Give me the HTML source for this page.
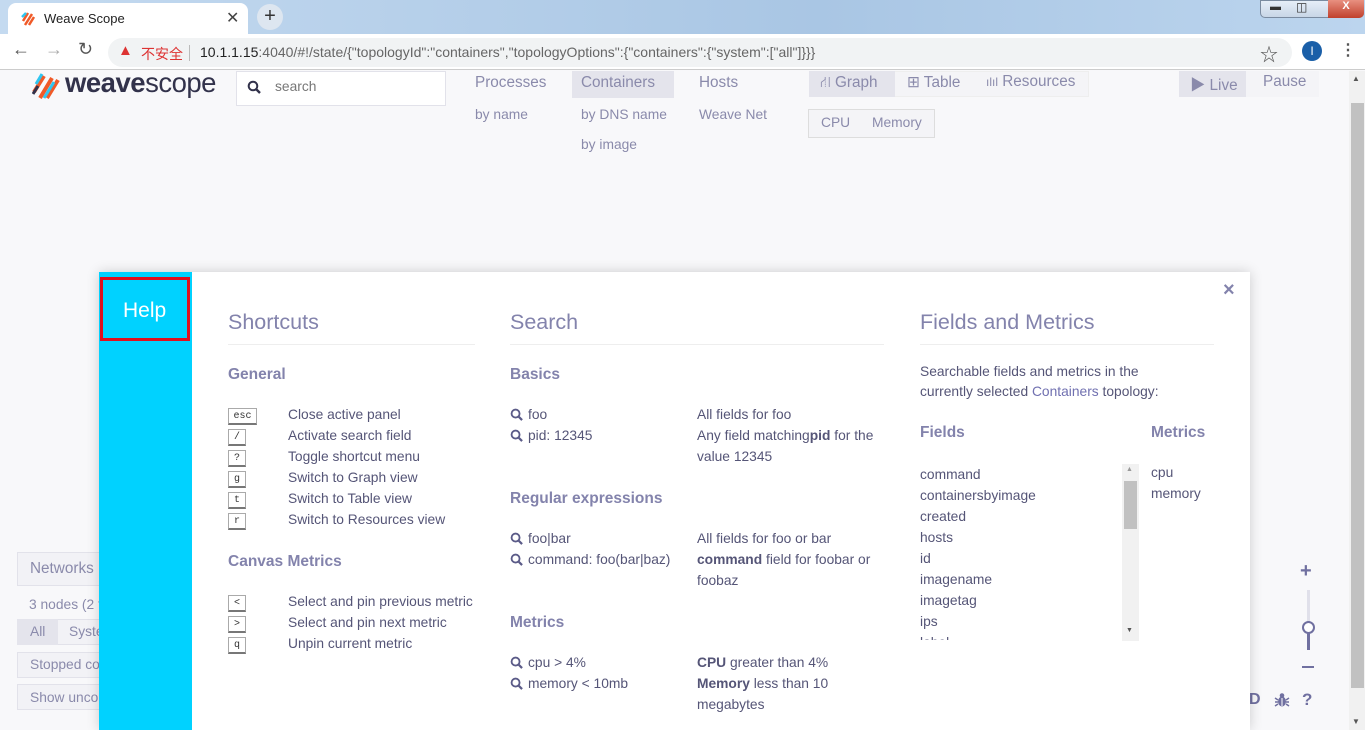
<!DOCTYPE html>
<html><head><meta charset="utf-8"><style>
*{box-sizing:border-box;margin:0;padding:0}
body{width:1365px;height:730px;overflow:hidden;position:relative;font-family:"Liberation Sans","Noto Sans CJK SC",sans-serif;background:#f8f8fa;color:#5b5b88}
.a{position:absolute;white-space:nowrap}
.tabbar{position:absolute;left:0;top:0;width:1365px;height:34px;background:linear-gradient(90deg,#c4daf0,#a9c6e4 60%,#bcd5ee)}
.tab{position:absolute;left:8px;top:3px;width:240px;height:32px;background:#fff;border-radius:8px 8px 0 0}
.toolbar{position:absolute;left:0;top:34px;width:1365px;height:36px;background:#fff;border-bottom:1px solid #ccc}
.url{position:absolute;left:108px;top:4px;width:1184px;height:29px;background:#f1f3f4;border-radius:15px}
.nav{font-size:15.3px;color:#8a8aab}
.t{font-size:13.8px;color:#555577}
.h2{font-size:21.5px;color:#8383ac}
.h3{font-size:15.5px;font-weight:bold;color:#8383ac}
.kbd{position:absolute;width:18px;height:17px;border:1px solid #aaa;border-bottom:2px solid #777;background:#fff;font-family:"Liberation Mono",monospace;font-size:10px;text-align:center;line-height:15px;color:#333}
.mag{display:inline-block;width:13px;height:13px;vertical-align:-2px;margin-right:5px}
</style></head><body>
<div class="tabbar"></div>
<div class="tab">
<svg class="a" style="left:12px;top:8px" width="16" height="16" viewBox="0 0 16 16"><path d="M3 10 L8 2 M5 14 L12 3 M9 14 L14 6" stroke="#f05a28" stroke-width="2.5"/><path d="M2 6 L6 2" stroke="#30c6f0" stroke-width="2.5"/></svg>
<span class="a" style="left:36px;top:8px;font-size:13px;color:#222">Weave Scope</span>
<span class="a" style="left:218px;top:5px;font-size:16px;color:#444">✕</span>
</div>
<div class="a" style="left:257px;top:4px;width:26px;height:26px;border-radius:13px;background:#dde6f0;font-size:20px;line-height:25px;text-align:center;color:#333">+</div>
<div class="a" style="left:1260px;top:0;width:104px;height:18px;border:1px solid #7a8ba0;border-radius:0 0 5px 5px;background:linear-gradient(#e6eef8,#c8d6e6)"></div>
<div class="a" style="left:1328px;top:0;width:36px;height:18px;background:linear-gradient(#e89080,#c0402c);border-radius:0 0 5px 0;color:#fff;font-size:11px;text-align:center;font-weight:bold">X</div>
<span class="a" style="left:1270px;top:1px;font-size:11px;color:#333">▬</span><span class="a" style="left:1296px;top:0px;font-size:12px;color:#333">◫</span>
<div class="toolbar">
<span class="a" style="left:12px;top:5px;font-size:18px;color:#555">←</span>
<span class="a" style="left:45px;top:5px;font-size:18px;color:#aaa">→</span>
<span class="a" style="left:78px;top:5px;font-size:18px;color:#555">↻</span>
<div class="url">
<span class="a" style="left:10px;top:4px;font-size:15px;color:#d33">▲</span>
<span class="a" style="left:33px;top:6px;font-size:14px;color:#d33">不安全</span>
<div class="a" style="left:81px;top:7px;width:1px;height:16px;background:#bbb"></div>
<span class="a" style="left:92px;top:6px;font-size:14px;color:#222">10.1.1.15<span style="color:#666">:4040/#!/state/{"topologyId":"containers","topologyOptions":{"containers":{"system":["all"]}}}</span></span>
<span class="a" style="left:1152px;top:3px;font-size:18px;color:#555">☆</span>
</div>
<div class="a" style="left:1302px;top:7px;width:20px;height:20px;border-radius:10px;background:#1a5fa8;color:#fff;font-size:12px;text-align:center;line-height:20px">I</div>
<span class="a" style="left:1340px;top:6px;font-size:16px;color:#555;font-weight:bold">⋮</span>
</div>
<div class="a" style="left:1349px;top:71px;width:16px;height:659px;background:#f1f1f1"></div>
<div class="a" style="left:1351px;top:103px;width:13px;height:585px;background:#c1c1c1"></div>
<span class="a" style="left:1352px;top:74px;font-size:8px;color:#555">▲</span>
<span class="a" style="left:1352px;top:717px;font-size:8px;color:#555">▼</span>
<svg class="a" style="left:32px;top:72px" width="30" height="28" viewBox="0 0 30 28"><path d="M2 20 L12 4 M8 26 L20 6 M15 26 L26 8" stroke="#f05a28" stroke-width="4"/><path d="M4 12 L10 2 M12 26 L22 10" stroke="#30c6f0" stroke-width="3"/><path d="M1 22 L6 14" stroke="#32324b" stroke-width="3"/></svg>
<span class="a" style="left:65px;top:67px;font-size:27.5px;color:#32324b;letter-spacing:-0.5px"><b>weave</b>scope</span>
<div class="a" style="left:236px;top:71px;width:210px;height:35px;background:#fff;border:1px solid #e2e2ea"></div>
<svg class="a" style="left:247px;top:80px" width="14" height="14" viewBox="0 0 14 14"><circle cx="6" cy="6" r="4.3" fill="none" stroke="#32324b" stroke-width="2"/><path d="M9 9 L13 13" stroke="#32324b" stroke-width="2.4"/></svg>
<span class="a t" style="left:275px;top:79px;color:#777">search</span>
<span class="a nav" style="left:475px;top:74px">Processes</span>
<span class="a t" style="left:475px;top:107px;color:#8a8aab">by name</span>
<div class="a" style="left:572px;top:71px;width:102px;height:27px;background:#e4e4ec"></div>
<span class="a nav" style="left:581px;top:74px">Containers</span>
<span class="a t" style="left:581px;top:107px;color:#8a8aab">by DNS name</span>
<span class="a t" style="left:581px;top:137px;color:#8a8aab">by image</span>
<span class="a nav" style="left:699px;top:74px">Hosts</span>
<span class="a t" style="left:699px;top:107px;color:#8a8aab">Weave Net</span>
<div class="a" style="left:809px;top:71px;width:280px;height:26px;background:#f4f4f7;border:1px solid #eee"></div>
<div class="a" style="left:809px;top:71px;width:86px;height:26px;background:#e4e4ec"></div>
<span class="a nav" style="left:820px;top:73px">⛙ Graph</span>
<span class="a nav" style="left:907px;top:73px">⊞ Table</span>
<span class="a nav" style="left:986px;top:73px"><span style="font-size:12px">ılıl</span> Resources</span>
<div class="a" style="left:808px;top:109px;width:127px;height:29px;background:#f4f4f7;border:1px solid #ddd"></div>
<span class="a t" style="left:821px;top:115px;color:#8a8aab">CPU</span>
<span class="a t" style="left:872px;top:115px;color:#8a8aab">Memory</span>
<div class="a" style="left:1179px;top:71px;width:140px;height:26px;background:#f4f4f7"></div>
<div class="a" style="left:1179px;top:71px;width:67px;height:26px;background:#e4e4ec"></div>
<span class="a nav" style="left:1190px;top:73px">▶ Live</span>
<span class="a nav" style="left:1263px;top:73px">Pause</span>
<div class="a" style="left:17px;top:552px;width:90px;height:34px;background:#f2f2f6;border:1px solid #e2e2ea"></div>
<span class="a nav" style="left:30px;top:560px">Networks</span>
<span class="a t" style="left:29px;top:597px;color:#8a8aab">3 nodes (2 f</span>
<div class="a" style="left:17px;top:619px;width:90px;height:26px;background:#f2f2f6;border:1px solid #e2e2ea"></div>
<div class="a" style="left:17px;top:619px;width:41px;height:26px;background:#e4e4ec"></div>
<span class="a t" style="left:30px;top:624px;color:#8a8aab">All</span><span class="a t" style="left:69px;top:624px;color:#8a8aab">Syste</span>
<div class="a" style="left:17px;top:652px;width:90px;height:26px;background:#f2f2f6;border:1px solid #e2e2ea"></div>
<span class="a t" style="left:30px;top:657px;color:#8a8aab">Stopped co</span>
<div class="a" style="left:17px;top:684px;width:90px;height:26px;background:#f2f2f6;border:1px solid #e2e2ea"></div>
<span class="a t" style="left:30px;top:690px;color:#8a8aab">Show unco</span>
<span class="a" style="left:1300px;top:560px;font-size:20px;color:#7070a0;font-weight:bold">+</span>
<div class="a" style="left:1307px;top:590px;width:3px;height:60px;background:#e0e0ea"></div>
<div class="a" style="left:1307px;top:630px;width:3px;height:20px;background:#7070a0"></div>
<div class="a" style="left:1302px;top:621px;width:13px;height:13px;border-radius:7px;border:2px solid #7070a0;background:#fff"></div>
<div class="a" style="left:1302px;top:666px;width:12px;height:2px;background:#7070a0"></div>
<span class="a" style="left:1249px;top:691px;font-size:16px;color:#7070a0;font-weight:bold">D</span>
<svg class="a" style="left:1274px;top:692px" width="16" height="16" viewBox="0 0 16 16"><ellipse cx="8" cy="9.5" rx="4" ry="5" fill="#7070a0"/><circle cx="8" cy="3.5" r="2.3" fill="#7070a0"/><path d="M1 6 L4 8 M1 10 H4 M1 14 L4 12 M15 6 L12 8 M15 10 H12 M15 14 L12 12" stroke="#7070a0" stroke-width="1.5"/><path d="M8 6 V14" stroke="#fff" stroke-width="1"/></svg>
<span class="a" style="left:1302px;top:690px;font-size:17px;color:#7070a0;font-weight:bold">?</span>
<div class="a" style="left:99px;top:272px;width:1151px;height:458px;background:#fff;box-shadow:0 0 12px rgba(0,0,0,.18)"></div>
<div class="a" style="left:99px;top:272px;width:93px;height:458px;background:#00d2ff"></div>
<div class="a" style="left:100px;top:277px;width:90px;height:64px;border:3px solid #e0101e"></div>
<span class="a" style="left:123px;top:299px;font-size:21px;color:#fff">Help</span>
<span class="a" style="left:1223px;top:279px;font-size:20px;color:#8383ac;font-weight:bold">×</span>
<span class="a h2" style="left:228px;top:310px">Shortcuts</span>
<div class="a" style="left:228px;top:344px;width:247px;height:1px;background:#eee"></div>
<span class="a h3" style="left:228px;top:366px">General</span>
<div class="kbd" style="left:228px;top:408px;width:29px">esc</div><span class="a t" style="left:288px;top:407px">Close active panel</span>
<div class="kbd" style="left:228px;top:429px">/</div><span class="a t" style="left:288px;top:428px">Activate search field</span>
<div class="kbd" style="left:228px;top:450px">?</div><span class="a t" style="left:288px;top:449px">Toggle shortcut menu</span>
<div class="kbd" style="left:228px;top:471px">g</div><span class="a t" style="left:288px;top:470px">Switch to Graph view</span>
<div class="kbd" style="left:228px;top:492px">t</div><span class="a t" style="left:288px;top:491px">Switch to Table view</span>
<div class="kbd" style="left:228px;top:513px">r</div><span class="a t" style="left:288px;top:512px">Switch to Resources view</span>
<span class="a h3" style="left:228px;top:553px">Canvas Metrics</span>
<div class="kbd" style="left:228px;top:595px">&lt;</div><span class="a t" style="left:288px;top:594px">Select and pin previous metric</span>
<div class="kbd" style="left:228px;top:616px">&gt;</div><span class="a t" style="left:288px;top:615px">Select and pin next metric</span>
<div class="kbd" style="left:228px;top:637px">q</div><span class="a t" style="left:288px;top:636px">Unpin current metric</span>
<svg width="0" height="0" style="position:absolute"><defs><symbol id="m" viewBox="0 0 14 14"><circle cx="6" cy="6" r="4.3" fill="none" stroke="#5b5b88" stroke-width="2"/><path d="M9 9 L13 13" stroke="#5b5b88" stroke-width="2.4"/></symbol></defs></svg>
<span class="a h2" style="left:510px;top:310px">Search</span>
<div class="a" style="left:510px;top:344px;width:374px;height:1px;background:#eee"></div>
<span class="a h3" style="left:510px;top:366px">Basics</span>
<span class="a t" style="left:510px;top:407px"><svg class="mag"><use href="#m"/></svg>foo</span>
<span class="a t" style="left:510px;top:428px"><svg class="mag"><use href="#m"/></svg>pid: 12345</span>
<span class="a t" style="left:697px;top:407px">All fields for foo</span>
<span class="a t" style="left:697px;top:428px">Any field matching<b>pid</b> for the</span>
<span class="a t" style="left:697px;top:449px">value 12345</span>
<span class="a h3" style="left:510px;top:490px">Regular expressions</span>
<span class="a t" style="left:510px;top:531px"><svg class="mag"><use href="#m"/></svg>foo|bar</span>
<span class="a t" style="left:510px;top:552px"><svg class="mag"><use href="#m"/></svg>command: foo(bar|baz)</span>
<span class="a t" style="left:697px;top:531px">All fields for foo or bar</span>
<span class="a t" style="left:697px;top:552px"><b>command</b> field for foobar or</span>
<span class="a t" style="left:697px;top:573px">foobaz</span>
<span class="a h3" style="left:510px;top:614px">Metrics</span>
<span class="a t" style="left:510px;top:655px"><svg class="mag"><use href="#m"/></svg>cpu &gt; 4%</span>
<span class="a t" style="left:510px;top:676px"><svg class="mag"><use href="#m"/></svg>memory &lt; 10mb</span>
<span class="a t" style="left:697px;top:655px"><b>CPU</b> greater than 4%</span>
<span class="a t" style="left:697px;top:676px"><b>Memory</b> less than 10</span>
<span class="a t" style="left:697px;top:697px">megabytes</span>
<span class="a h2" style="left:920px;top:310px">Fields and Metrics</span>
<div class="a" style="left:920px;top:344px;width:294px;height:1px;background:#eee"></div>
<span class="a t" style="left:920px;top:364px">Searchable fields and metrics in the</span>
<span class="a t" style="left:920px;top:384px">currently selected <span style="color:#7070b0">Containers</span> topology:</span>
<span class="a h3" style="left:920px;top:424px">Fields</span>
<span class="a h3" style="left:1151px;top:424px">Metrics</span>
<div class="a" style="left:920px;top:464px;width:200px;height:176px;overflow:hidden">
<div class="t" style="line-height:21px">command<br>containersbyimage<br>created<br>hosts<br>id<br>imagename<br>imagetag<br>ips<br>label</div></div>
<div class="a" style="left:1122px;top:464px;width:17px;height:177px;background:#f1f1f1"></div>
<div class="a" style="left:1124px;top:481px;width:13px;height:48px;background:#c1c1c1"></div>
<span class="a" style="left:1126px;top:466px;font-size:7px;color:#999">▲</span>
<span class="a" style="left:1126px;top:627px;font-size:7px;color:#555">▼</span>
<span class="a t" style="left:1151px;top:465px">cpu</span>
<span class="a t" style="left:1151px;top:486px">memory</span>
</body></html>
